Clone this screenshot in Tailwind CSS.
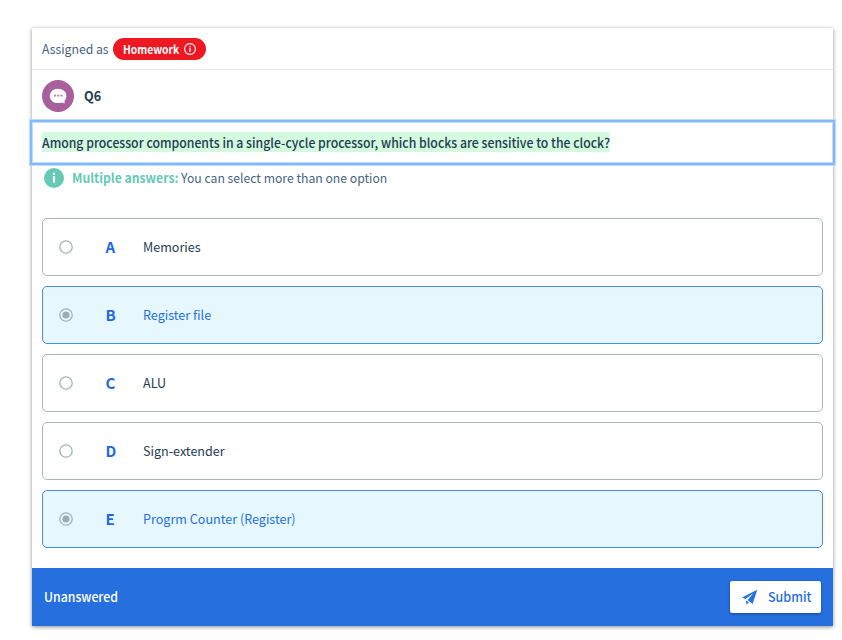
<!DOCTYPE html>
<html lang="en">
<head>
<meta charset="utf-8">
<title>Question 6</title>
<script src="https://cdn.jsdelivr.net/npm/@tailwindcss/browser@4"></script>
</head>
<body class="h-screen pt-7 pl-8 bg-white font-['Noto_Sans_CJK_SC','Noto_Sans_CJK_JP',sans-serif] text-[13px] leading-5 text-[#243b53]">
<main class="w-[801px] h-[598px] flex flex-col bg-white shadow-[0_1px_4px_rgba(0,0,0,0.45)]">
  <header class="h-[42px] shrink-0 flex items-center border-b border-[#e6e9ec] pl-[10px]">
    <span class="w-[66px] whitespace-nowrap text-[#486581] origin-left scale-x-[0.94]">Assigned as</span>
    <span class="ml-[5px] h-[22px] w-[93px] rounded-full bg-[#ee1822] text-white font-bold text-[11px] flex items-center pl-[10px]"><span class="w-[61px] origin-left scale-x-[0.94]">Homework</span>
      <svg class="size-3" viewBox="0 0 12 12" fill="none" stroke="currentColor"><circle cx="6" cy="6" r="5.4" stroke-width="1.1"/><path d="M6 5.2v3.700M6 2.900v1.400" stroke-width="1.4"/></svg>
    </span>
  </header>
  <div class="h-[52px] shrink-0 flex items-center pl-[10px] gap-[10px]">
    <svg class="size-8" viewBox="0 0 32 32"><circle cx="16" cy="16" r="16" fill="#a8609b"/><path d="M16 8.700c4.700 0 8.400 3.100 8.400 7.200 0 1.800-.7 3.400-1.900 4.600l.1 3-3-1c-1.100.4-2.300.6-3.600.6-4.700 0-8.200-3.200-8.200-7.200S11.300 8.700 16 8.700Z" fill="#fff"/><path d="M12 14.800h2v1.600h-2zm3.200 0h2v1.600h-2zm3.200 0h2v1.600h-2z" fill="#b57bab"/></svg>
    <b class="origin-left scale-x-[0.97]">Q6</b>
  </div>
  <div class="h-[41px] shrink-0 flex items-center pl-[10px] shadow-[0_0_0_2px_#82b9fb,0_0_0_3px_#c0dcfd,inset_0_0_0_1px_#c0dcfd]">
    <span class="h-5 leading-[22px] -mt-px whitespace-nowrap font-medium bg-[#d3fade] origin-left scale-x-[0.943]">Among processor components in a single-cycle processor, which blocks are sensitive to the clock?</span>
  </div>
  <div class="h-[29px] shrink-0 flex items-center pl-3">
    <svg class="size-5 mr-2" viewBox="0 0 20 20"><circle cx="10" cy="10" r="10" fill="#65c9b5"/><path d="M8.900 4.800h2.200V7H8.900zm0 3.500h2.200v6.500H8.900z" fill="#fff"/></svg>
    <b class="w-[109px] whitespace-nowrap text-[#65c9b5] origin-left scale-x-[0.94]">Multiple answers:</b><span class="text-[#486581] whitespace-nowrap origin-left scale-x-[0.938]">You can select more than one option</span>
  </div>
  <section class="mt-[25.500px] px-[10px] flex flex-col gap-[10px]">
    <div class="h-[58px] flex items-center rounded-[5px] border border-[#a9b6c2] pl-[15.5px]">
      <svg class="size-[14px]" viewBox="0 0 14 14"><circle cx="7" cy="7" r="6.200" fill="none" stroke="#a3b1bd" stroke-width="1.300"/></svg>
      <b class="ml-[33px] w-[37.500px] text-[15px] text-[#1f69df]">A</b><span class="origin-left scale-x-[0.967] pt-px">Memories</span>
    </div>
    <div class="h-[58px] flex items-center rounded-[5px] border border-[#488ae8] bg-[#e6f8fd] pl-[15.5px] text-[#256fde]">
      <svg class="size-[14px]" viewBox="0 0 14 14"><circle cx="7" cy="7" r="6.200" fill="none" stroke="#a3b1bd" stroke-width="1.300"/><circle cx="7" cy="7" r="3.600" fill="#9cabb5"/></svg>
      <b class="ml-[33px] w-[37.500px] text-[15px] text-[#1f69df]">B</b><span class="origin-left scale-x-[0.967] pt-px">Register file</span>
    </div>
    <div class="h-[58px] flex items-center rounded-[5px] border border-[#a9b6c2] pl-[15.5px]">
      <svg class="size-[14px]" viewBox="0 0 14 14"><circle cx="7" cy="7" r="6.200" fill="none" stroke="#a3b1bd" stroke-width="1.300"/></svg>
      <b class="ml-[33px] w-[37.500px] text-[15px] text-[#1f69df]">C</b><span class="origin-left scale-x-[0.967] pt-px">ALU</span>
    </div>
    <div class="h-[58px] flex items-center rounded-[5px] border border-[#a9b6c2] pl-[15.5px]">
      <svg class="size-[14px]" viewBox="0 0 14 14"><circle cx="7" cy="7" r="6.200" fill="none" stroke="#a3b1bd" stroke-width="1.300"/></svg>
      <b class="ml-[33px] w-[37.500px] text-[15px] text-[#1f69df]">D</b><span class="origin-left scale-x-[0.967] pt-px">Sign-extender</span>
    </div>
    <div class="h-[58px] flex items-center rounded-[5px] border border-[#488ae8] bg-[#e6f8fd] pl-[15.5px] text-[#256fde]">
      <svg class="size-[14px]" viewBox="0 0 14 14"><circle cx="7" cy="7" r="6.200" fill="none" stroke="#a3b1bd" stroke-width="1.300"/><circle cx="7" cy="7" r="3.600" fill="#9cabb5"/></svg>
      <b class="ml-[33px] w-[37.500px] text-[15px] text-[#1f69df]">E</b><span class="origin-left scale-x-[0.967] pt-px">Progrm Counter (Register)</span>
    </div>
  </section>
  <footer class="mt-auto h-[58px] shrink-0 flex items-center justify-between bg-[#266fde] pl-3 pr-3 text-white">
    <span class="font-medium origin-left scale-x-[0.945]">Unanswered</span>
    <button class="w-[91px] h-8 rounded-[2px] bg-white text-[#256fde] flex items-center pl-3 shadow-[0_1px_3px_rgba(0,0,0,0.35)]">
      <svg class="w-4 h-4" viewBox="0 0 16 16" fill="currentColor"><path d="M15.300.8 0 8.600l3.500 1.500 8-6L5.700 11l4.900 3.900Z"/><path d="M3.700 11.200 4.600 15.800 6.800 13.200Z"/></svg>
      <span class="ml-[10px] font-medium origin-left scale-x-[0.96]">Submit</span>
    </button>
  </footer>
</main>
</body>
</html>
